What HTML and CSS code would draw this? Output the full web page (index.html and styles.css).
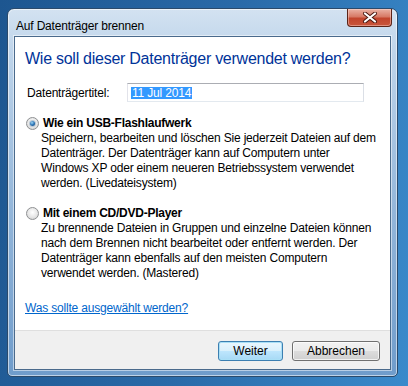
FILE: index.html
```html
<!DOCTYPE html>
<html lang="de">

<head>
    <meta charset="UTF-8">
    <title>Auf Datenträger brennen</title>
    <link rel="stylesheet" href="styles.css">
</head>

<body>
    <div class="window">
        <!-- title bar -->
        <div class="titlebar">
            <span class="title">Auf Datenträger brennen</span>
            <div class="close">
                <svg width="16" height="11" viewBox="0 0 16 11">
                    <path d="M3 1.5 L13 9.5 M13 1.5 L3 9.5" stroke="#4a1810" stroke-width="4" stroke-linecap="round" />
                    <path d="M3 1.5 L13 9.5 M13 1.5 L3 9.5" stroke="#ffffff" stroke-width="2.2" stroke-linecap="round" />
                </svg>
            </div>
        </div>

        <div class="client">
            <div class="content">
                <h1 class="heading">Wie soll dieser Datenträger verwendet werden?</h1>

                <div class="field">
                    <label class="field-label">Datenträgertitel:</label>
                    <div class="textbox"><span class="selected">11 Jul 2014</span></div>
                </div>

                <div class="option">
                    <span class="radio checked"><span class="dot"></span></span>
                    <span class="option-title">Wie ein USB-Flashlaufwerk</span>
                </div>
                <p class="option-text">Speichern, bearbeiten und löschen Sie jederzeit Dateien auf dem<br>
                    Datenträger. Der Datenträger kann auf Computern unter<br>
                    Windows XP oder einem neueren Betriebssystem verwendet<br>
                    werden. (Livedateisystem)</p>

                <div class="option second">
                    <span class="radio"></span>
                    <span class="option-title">Mit einem CD/DVD-Player</span>
                </div>
                <p class="option-text">Zu brennende Dateien in Gruppen und einzelne Dateien können<br>
                    nach dem Brennen nicht bearbeitet oder entfernt werden. Der<br>
                    Datenträger kann ebenfalls auf den meisten Computern<br>
                    verwendet werden. (Mastered)</p>

                <a class="help" href="#">Was sollte ausgewählt werden?</a>
            </div>

            <div class="footer">
                <button class="btn default">Weiter</button>
                <button class="btn wide">Abbrechen</button>
            </div>
        </div>
    </div>
</body>

</html>
```

FILE: styles.css
```css
body {
    margin: 0;
    width: 408px;
    height: 386px;
    overflow: hidden;
    font-family: "Liberation Sans", Arial, sans-serif;
    font-size: 12px;
    letter-spacing: -0.18px;
    background: linear-gradient(100deg, #1d5690 0%, #2a6aa8 50%, #3a8acb 100%);
}

.window {
    margin: 8px 0 0 7px;
    width: 391px;
    height: 369px;
    border: 1px solid #2b4a6b;
    border-radius: 7px 7px 5px 5px;
    padding: 0 6px 6px 6px;
    box-sizing: border-box;
    background: linear-gradient(180deg, #d3e2f1 0%, #bed4ea 12%, #93b6da 55%, #6f9ccb 100%);
    box-shadow: inset 0 0 0 1px rgba(255, 255, 255, 0.55);
    display: flex;
    flex-direction: column;
}

.titlebar {
    height: 27px;
    display: flex;
    justify-content: space-between;
    align-items: flex-start;
}

.title {
    margin: 10px 0 0 2px;
    color: #000;
    line-height: 14px;
}

.close {
    width: 45px;
    height: 18px;
    margin-right: -1px;
    box-sizing: border-box;
    border: 1px solid #5b2418;
    border-top: none;
    border-radius: 0 0 4px 4px;
    background: linear-gradient(180deg, #eab3a5 0%, #d77a66 45%, #c2452d 55%, #c8563c 100%);
    box-shadow: inset 0 0 0 1px rgba(255, 220, 210, 0.45);
    display: flex;
    justify-content: center;
    align-items: center;
}

.client {
    flex: 1;
    border: 1px solid #4a6a8c;
    box-shadow: 0 0 0 1px rgba(255, 255, 255, 0.5);
    display: flex;
    flex-direction: column;
    background: #fff;
}

.content {
    height: 293px;
    padding: 12px 0 0 10px;
    box-sizing: border-box;
}

.heading {
    margin: 0;
    font-size: 16px;
    font-weight: normal;
    line-height: 20px;
    letter-spacing: -0.26px;
    color: #003399;
}

.field {
    margin-top: 14px;
    display: flex;
    align-items: center;
    height: 19px;
}

.field-label {
    width: 100px;
    padding-left: 2px;
}

.textbox {
    width: 237px;
    height: 19px;
    box-sizing: border-box;
    border: 1px solid #abadb3;
    border-color: #abadb3 #dbdfe6 #e3e9ef #e2e3ea;
    padding: 2px 0 0 3px;
}

.selected {
    background: #3399ff;
    color: #fff;
    line-height: 12px;
    display: inline-block;
    padding: 0 1px;
}

.option {
    margin-top: 13px;
    display: flex;
    align-items: center;
    height: 16px;
}

.option.second {
    margin-top: 14px;
}

.radio {
    width: 13px;
    height: 13px;
    margin: 0 4px 0 1px;
    box-sizing: border-box;
    border-radius: 50%;
    border: 1px solid #8e9092;
    background: radial-gradient(circle at 50% 40%, #ffffff 0%, #e6e6e6 55%, #c9c9c9 100%);
    display: flex;
    justify-content: center;
    align-items: center;
}

.radio .dot {
    width: 5px;
    height: 5px;
    border-radius: 50%;
    background: radial-gradient(circle at 40% 35%, #9fd6f5 0%, #2b74b6 50%, #0f3f73 100%);
    box-shadow: 0 0 0 1px #b9c7d4;
}

.option-title {
    font-weight: bold;
    color: #000;
    letter-spacing: -0.25px;
}

.option-text {
    margin: 0 0 0 16px;
    line-height: 15px;
    color: #000;
    white-space: nowrap;
}

.help {
    display: inline-block;
    margin-top: 19px;
    line-height: 16px;
    color: #0066cc;
    text-decoration: underline;
}

.footer {
    flex: 1;
    border-top: 1px solid #dfdfdf;
    background: #f0f0f0;
    display: flex;
    justify-content: flex-end;
    align-items: flex-start;
    gap: 9px;
    padding: 10px 10px 0 0;
}

.btn {
    width: 65px;
    height: 20px;
    padding: 0;
    font-family: inherit;
    font-size: 12px;
    color: #000;
    border: 1px solid #707070;
    border-radius: 3px;
    background: linear-gradient(180deg, #f2f2f2 0%, #ebebeb 49%, #dddddd 50%, #cfcfcf 100%);
    box-shadow: inset 0 0 0 1px rgba(255, 255, 255, 0.7);
}

.btn.default {
    border-color: #3c7fb1;
    box-shadow: inset 0 0 0 1px #a9dff6;
    background: linear-gradient(180deg, #eaf6fd 0%, #d9f0fc 49%, #bee6fd 50%, #a7d9f5 100%);
}

.btn.wide {
    width: 88px;
}
```
